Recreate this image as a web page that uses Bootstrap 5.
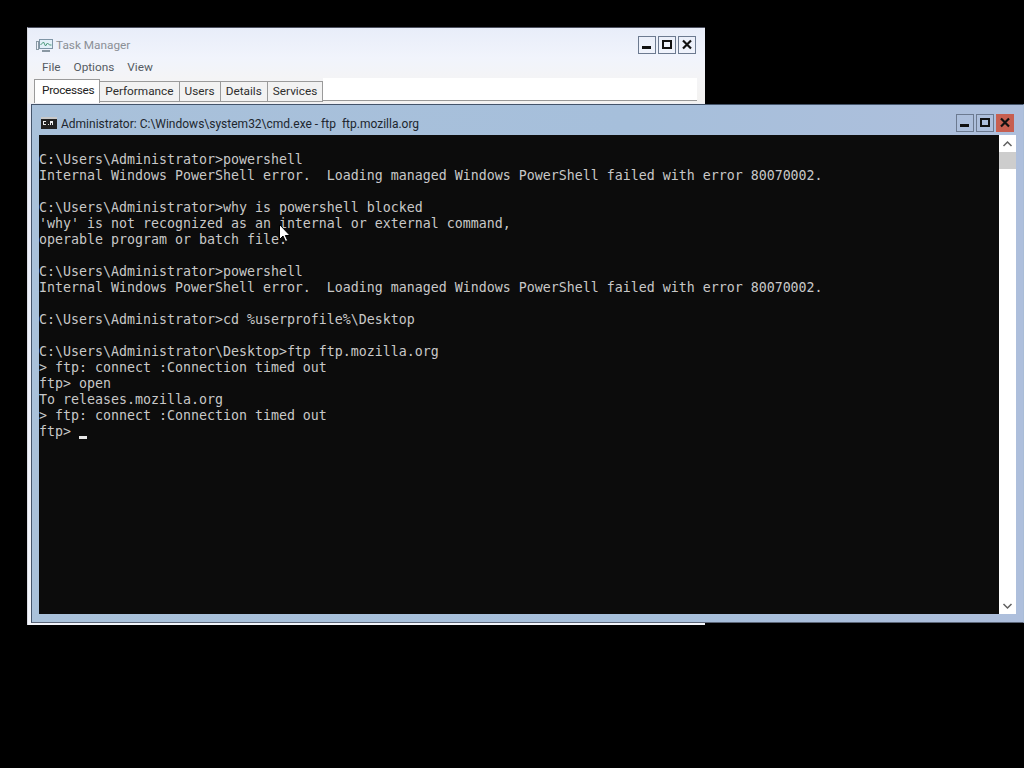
<!DOCTYPE html>
<html lang="en">
<head>
<meta charset="utf-8">
<title>Task Manager and cmd</title>
<link href="https://cdn.jsdelivr.net/npm/bootstrap@5.3.0/dist/css/bootstrap.min.css" rel="stylesheet">
<style>
html,body{height:100%;background:#000;overflow:hidden}
body{position:relative;width:1024px;height:768px;font-family:Roboto,"Liberation Sans",sans-serif}
.win-tm{position:absolute;left:27px;top:27px;width:678px;height:598px;background:linear-gradient(180deg,#e8edf9 0,#f1f4fc 30px,#f4f4f6 50px,#f3f2f0 75px,#e9ecf8 76px,#f4f6fc 100%);border-top:1px solid #4d5160;border-left:1px solid #d9dbe3;color:#333}
.tm-title{height:31px;padding:3px 9px 0 8px}
.tm-name{font-size:11.8px;color:#8b8f96;margin-left:3px;padding-top:1px}
.tm-menu{height:17px;padding-left:14px;gap:13px;font-size:11.8px;color:#555b63}
.tm-tabs{padding:0 8px 0 6px;height:27px;align-items:flex-end}
.tm-tab{height:21px;margin-bottom:1px;padding:0 5px;font-size:11.8px;line-height:19px;background:#f2f2f2;border:1px solid #9a9a9a;border-left-width:0;color:#2e2e2e;white-space:nowrap}
.tm-tab.sel{height:24px;margin-bottom:0;padding:0 5px 0 7px;background:#fff;border-left-width:1px;border-bottom:0;line-height:20px;color:#222;letter-spacing:-.3px}
.tm-tabfill{flex:1;height:23px;margin-bottom:2px;background:#fff;border-bottom:1px solid #999}
.win-cmd{position:absolute;left:31px;top:104px;width:993px;height:519px;background:linear-gradient(90deg,#a9c1da 0,#a6bfdb 60%,#aebfdc 100%);border:1px solid #44546a;border-right-color:#a9bcd6;border-bottom:1px solid #5c6678;display:flex;flex-direction:column}
.cmd-title{height:30px;flex:none;padding:6px 9px 0 9px;font-size:12px;color:#20262e;white-space:pre}
.cmd-name{margin-left:4px;padding-top:1px}
.cmd-body{height:479px;margin:0 7px 0 7px;flex:none}
.console{width:960px;background:#0c0c0c;color:#c8c8c8;font-family:"DejaVu Sans Mono","Liberation Mono",monospace;font-size:13.29px;line-height:16px;padding:17px 0 0 0;white-space:pre;position:relative;overflow:hidden}
.caret{position:absolute;left:40px;top:301px;width:8px;height:3px;background:#e6e6e6}
.sbar{width:17px;background:#fff;flex:none}
.sb-btn{height:17px}
.sb-thumb{height:17px;background:#cdcdcd}
.sb-mid{flex:1}
.wbtns{gap:2px}
.wbtn{width:18px;height:18px;border:1px solid #6c7a90;background:transparent;padding:0}
.wbtn.cl{background:#c75f50;border-color:#c75f50}
.cursor{position:absolute;left:279px;top:224px;width:11px;height:19px}
</style>
</head>
<body>
<div class="win-tm">
  <div class="tm-title d-flex align-items-center justify-content-between">
    <div class="d-flex align-items-center">
      <svg width="17" height="15" viewBox="0 0 17 15"><rect x="0.5" y="3.5" width="2" height="8" fill="none" stroke="#8a9aa5"/><rect x="3.5" y="1.5" width="13" height="9" fill="#e3f0f8" stroke="#7f95a6"/><path d="M4.5 7l3-3 2 4 2-3 2 2h2" fill="none" stroke="#4a9a7a"/><path d="M6 13h8" stroke="#8a98a3" stroke-width="2"/></svg>
      <span class="tm-name">Task Manager</span>
    </div>
    <div class="d-flex wbtns">
      <button class="wbtn d-flex align-items-center justify-content-center" aria-label="Minimize"><svg width="16" height="16" viewBox="0 0 16 16"><rect x="3" y="9" width="9" height="3" fill="#111"/></svg></button>
      <button class="wbtn d-flex align-items-center justify-content-center" aria-label="Maximize"><svg width="16" height="16" viewBox="0 0 16 16"><rect x="4" y="4" width="8" height="7" fill="none" stroke="#111" stroke-width="2"/></svg></button>
      <button class="wbtn d-flex align-items-center justify-content-center" aria-label="Close"><svg width="16" height="16" viewBox="0 0 16 16"><path d="M4 3.5l8 8M12 3.5l-8 8" stroke="#111" stroke-width="2.2"/></svg></button>
    </div>
  </div>
  <div class="tm-menu d-flex align-items-center"><span>File</span><span>Options</span><span>View</span></div>
  <div class="tm-tabs d-flex">
    <div class="tm-tab sel">Processes</div>
    <div class="tm-tab">Performance</div>
    <div class="tm-tab">Users</div>
    <div class="tm-tab">Details</div>
    <div class="tm-tab">Services</div>
    <div class="tm-tabfill"></div>
  </div>
</div>

<div class="win-cmd">
  <div class="cmd-title d-flex align-items-center justify-content-between">
    <div class="d-flex align-items-center">
      <svg width="16" height="12" viewBox="0 0 16 12"><rect width="16" height="12" fill="#222"/><rect y="0" width="16" height="2" fill="#c9c9c9"/><path d="M2 4h3v1H3v2h2v1H2zM7 7h1v1H7zM9 4h3v4h-1V6h-1v2H9z" fill="#eee"/></svg>
      <span class="cmd-name">Administrator: C:\Windows\system32\cmd.exe - ftp  ftp.mozilla.org</span>
    </div>
    <div class="d-flex wbtns">
      <button class="wbtn d-flex align-items-center justify-content-center" aria-label="Minimize"><svg width="16" height="16" viewBox="0 0 16 16"><rect x="3" y="9" width="9" height="3" fill="#111"/></svg></button>
      <button class="wbtn d-flex align-items-center justify-content-center" aria-label="Maximize"><svg width="16" height="16" viewBox="0 0 16 16"><rect x="4" y="4" width="8" height="7" fill="none" stroke="#111" stroke-width="2"/></svg></button>
      <button class="wbtn cl d-flex align-items-center justify-content-center" aria-label="Close"><svg width="16" height="16" viewBox="0 0 16 16"><path d="M4 3.5l8 8M12 3.5l-8 8" stroke="#111" stroke-width="2.2"/></svg></button>
    </div>
  </div>
  <div class="cmd-body d-flex">
    <div class="console">C:\Users\Administrator&gt;powershell
Internal Windows PowerShell error.  Loading managed Windows PowerShell failed with error 80070002.

C:\Users\Administrator&gt;why is powershell blocked
'why' is not recognized as an internal or external command,
operable program or batch file.

C:\Users\Administrator&gt;powershell
Internal Windows PowerShell error.  Loading managed Windows PowerShell failed with error 80070002.

C:\Users\Administrator&gt;cd %userprofile%\Desktop

C:\Users\Administrator\Desktop&gt;ftp ftp.mozilla.org
&gt; ftp: connect :Connection timed out
ftp&gt; open
To releases.mozilla.org
&gt; ftp: connect :Connection timed out
ftp&gt; <span class="caret"></span></div>
    <div class="sbar d-flex flex-column">
      <div class="sb-btn d-flex align-items-center justify-content-center"><svg width="11" height="8" viewBox="0 0 11 8"><path d="M1.5 6l4-4 4 4" fill="none" stroke="#606060" stroke-width="1.5"/></svg></div>
      <div class="sb-thumb"></div>
      <div class="sb-mid"></div>
      <div class="sb-btn d-flex align-items-center justify-content-center"><svg width="11" height="8" viewBox="0 0 11 8"><path d="M1.5 2l4 4 4-4" fill="none" stroke="#606060" stroke-width="1.5"/></svg></div>
    </div>
  </div>
</div>
<svg class="cursor" viewBox="0 0 11 19"><path d="M0.5 0.5v15l3.5-3.5 2.5 5.5 2.2-1-2.4-5h4.7z" fill="#fff" stroke="#000" stroke-width="1"/></svg>
<script src="https://cdn.jsdelivr.net/npm/bootstrap@5.3.0/dist/js/bootstrap.bundle.min.js"></script>
</body>
</html>
